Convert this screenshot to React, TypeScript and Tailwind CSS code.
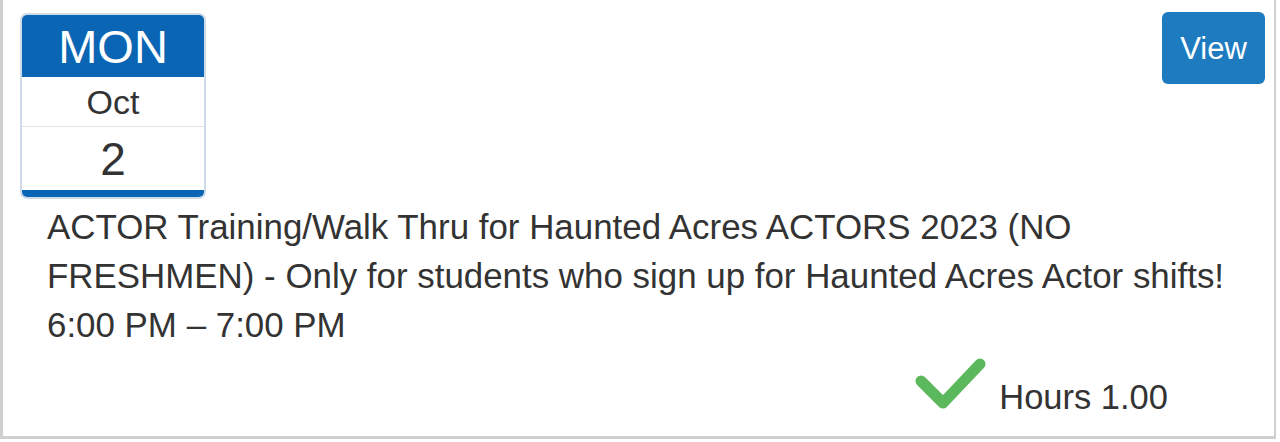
export default function App() {
  return (
    <div
      className="h-[442px] w-[1280px] overflow-hidden bg-white text-[#333]"
      style={{ fontFamily: '"Liberation Sans", Arial, sans-serif' }}
    >
      <div className="flex h-[439px] w-[1276px] flex-col border-b-[3px] border-l-[3px] border-r-[2px] border-[#cfcfcf] pl-[17px] pr-[9px]">
        <div className="flex items-start justify-between pt-[12px]">
          <CalendarBadge />
          <button className="h-[72px] w-[103px] rounded-[6px] bg-[#1f7bc0] text-[31px] leading-none text-white">
            View
          </button>
        </div>
        <div className="w-[1220px] pl-[27px] pt-[3px] text-[34.9px] leading-[49px]">
          <p>
            ACTOR Training/Walk Thru for Haunted Acres ACTORS 2023 (NO FRESHMEN) - Only for students who sign up for Haunted Acres Actor shifts!
          </p>
          <p>6:00 PM – 7:00 PM</p>
        </div>
        <div className="mt-[8px] flex items-start justify-end gap-[13px] pr-[97px]">
          <CheckIcon />
          <span className="pt-[23px] text-[34.5px] leading-none">Hours 1.00</span>
        </div>
      </div>
    </div>
  );
}

function CalendarBadge() {
  return (
    <div className="mt-[1px] flex h-[186px] w-[186px] flex-col overflow-hidden rounded-[7px] border-2 border-[#cfdbe8] bg-white">
      <div className="flex h-[62px] items-center justify-center bg-[#0a66b4] text-[47px] leading-none text-white">
        MON
      </div>
      <div className="flex h-[50px] items-center justify-center border-b border-[#e2e2e2] text-[34px] leading-none">
        Oct
      </div>
      <div className="flex flex-1 items-center justify-center text-[46px] leading-none">2</div>
      <div className="h-[7px] bg-[#0a66b4]" />
    </div>
  );
}

function CheckIcon() {
  return (
    <svg width="72" height="52" viewBox="0 0 72 52" fill="none">
      <path
        d="M7 24 L29 46 L66 7"
        stroke="#5cb85c"
        strokeWidth="11"
        strokeLinecap="round"
        strokeLinejoin="round"
      />
    </svg>
  );
}
